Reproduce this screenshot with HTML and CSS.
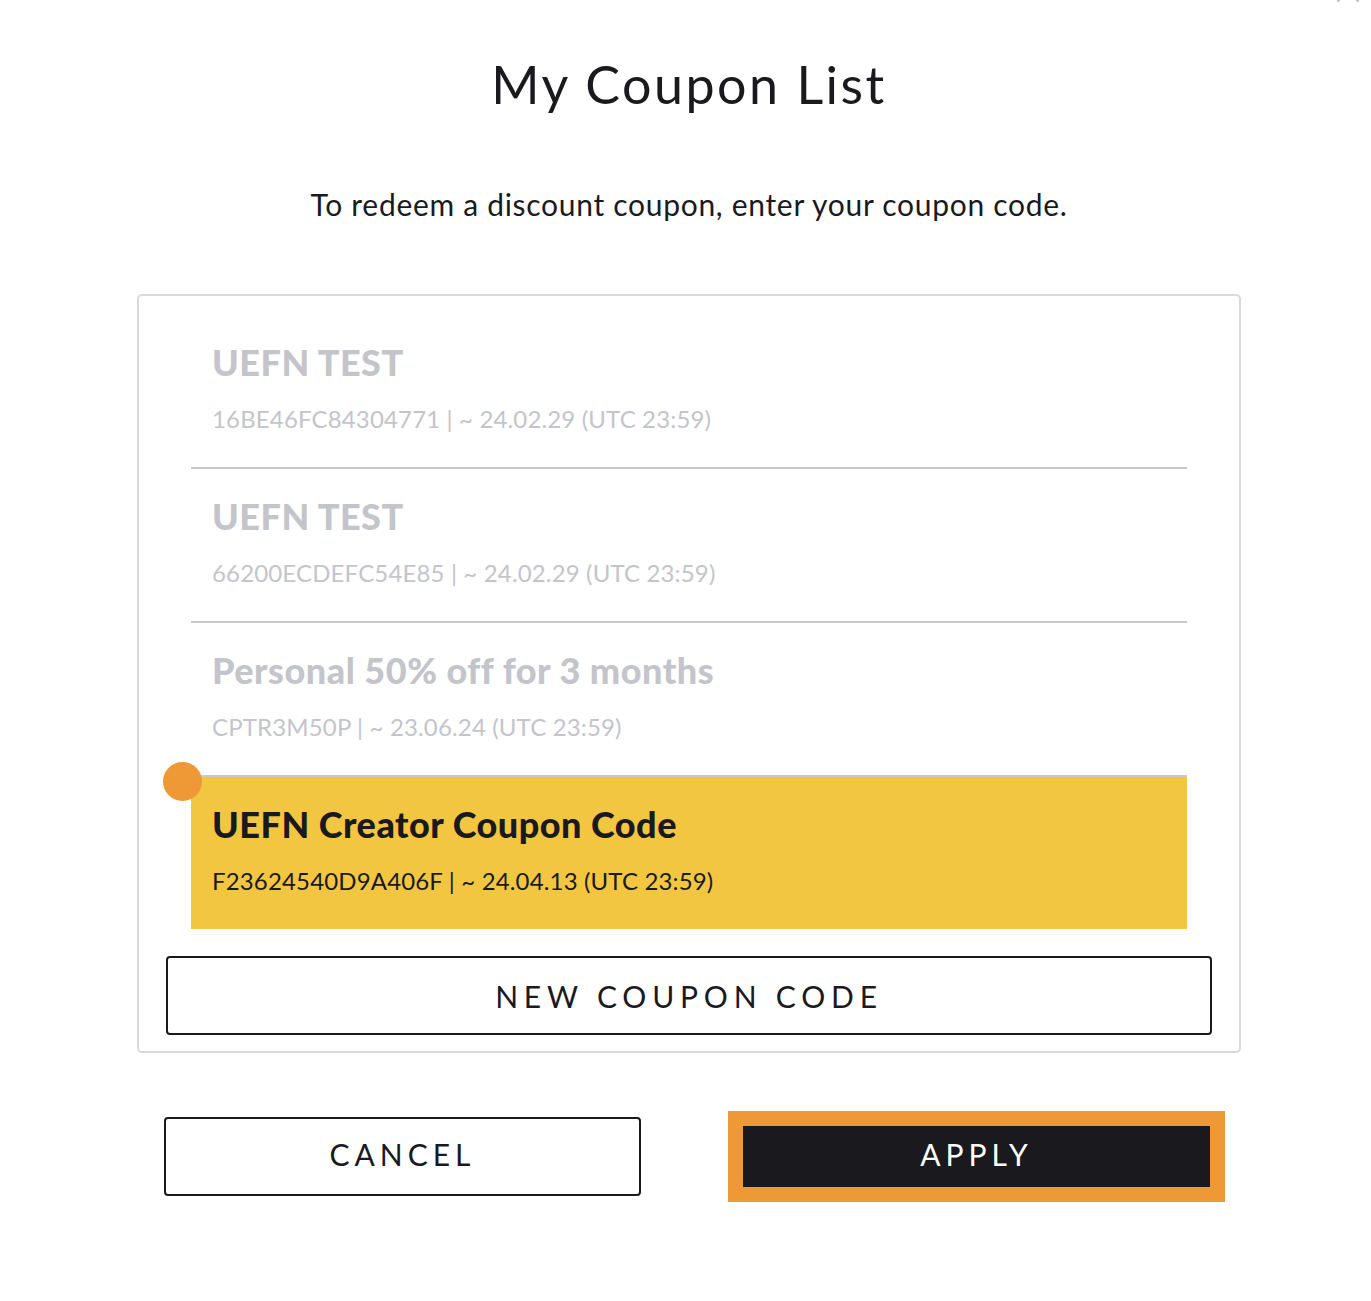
FILE: index.html
```html
<!DOCTYPE html>
<html lang="en">
  <head>
    <meta charset="UTF-8" />
    <title>My Coupon List</title>
    <link rel="stylesheet" href="styles.css">
  </head>
  <body>
    <main class="dialog">
      <span class="dialog-close"></span>
      <h1 class="dialog-title">My Coupon List</h1>
      <p class="dialog-hint">To redeem a discount coupon, enter your coupon code.</p>

      <section class="coupon-box">
        <ul class="coupon-list">
          <li class="coupon">
            <h2 class="coupon-name">UEFN TEST</h2>
            <p class="coupon-meta">16BE46FC84304771 | ~ 24.02.29 (UTC 23:59)</p>
          </li>
          <li class="coupon">
            <h2 class="coupon-name">UEFN TEST</h2>
            <p class="coupon-meta">66200ECDEFC54E85 | ~ 24.02.29 (UTC 23:59)</p>
          </li>
          <li class="coupon">
            <h2 class="coupon-name">Personal 50% off for 3 months</h2>
            <p class="coupon-meta">CPTR3M50P | ~ 23.06.24 (UTC 23:59)</p>
          </li>
          <li class="coupon coupon-selected">
            <span class="coupon-dot"></span>
            <h2 class="coupon-name">UEFN Creator Coupon Code</h2>
            <p class="coupon-meta">F23624540D9A406F | ~ 24.04.13 (UTC 23:59)</p>
          </li>
        </ul>
        <button class="btn btn-outline btn-new">NEW COUPON CODE</button>
      </section>

      <div class="actions">
        <button class="btn btn-outline btn-cancel">CANCEL</button>
        <div class="apply-focus">
          <button class="btn btn-dark btn-apply">APPLY</button>
        </div>
      </div>
    </main>
  </body>
</html>
```

FILE: styles.css
```css
body {
  margin: 0;
  background-color: white;
  font-family: Lato, "Open Sans", sans-serif;
  color: #1a1a1e;
}

.dialog {
  position: relative;
  width: 1104px;
  margin-left: 137px;
  padding-top: 54px;
}

/* close button, mostly scrolled out of view */
.dialog-close {
  position: absolute;
  top: -20px;
  right: -118px;
  width: 22px;
  height: 22px;
}

.dialog-close::before,
.dialog-close::after {
  content: "";
  position: absolute;
  left: 10px;
  top: -4px;
  width: 2px;
  height: 30px;
  background-color: #b8b8be;
  transform: rotate(45deg);
}

.dialog-close::after {
  transform: rotate(-45deg);
}

.dialog-title {
  margin: 0;
  font-size: 52px;
  line-height: 60px;
  font-weight: 400;
  letter-spacing: 2.5px;
  text-align: center;
}

.dialog-hint {
  margin: 72px 0 0;
  font-size: 30px;
  line-height: 36px;
  letter-spacing: 0.7px;
  text-align: center;
}

.coupon-box {
  margin-top: 72px;
  border: 2px solid #d9d9db;
  border-radius: 5px;
  padding: 19px 27px 16px;
}

.coupon-list {
  list-style: none;
  margin: 0 25px;
  padding: 0;
}

.coupon {
  position: relative;
  padding: 25px 21px 33px;
  border-bottom: 2px solid #c8c8cd;
  color: #c4c4cb;
}

.coupon:last-child {
  border-bottom: 0;
}

.coupon-selected {
  background-color: #f2c641;
  color: #1a1a1e;
}

.coupon-dot {
  position: absolute;
  left: -28px;
  top: -15px;
  width: 39px;
  height: 39px;
  border-radius: 50%;
  background-color: #ef9836;
}

.coupon-name {
  margin: 0;
  font-size: 36px;
  line-height: 44px;
  font-weight: 900;
  letter-spacing: 0.5px;
}

.coupon-meta {
  margin: 20px 0 0;
  font-size: 24px;
  line-height: 30px;
  letter-spacing: 0.15px;
}

.btn {
  font-family: inherit;
  font-size: 30px;
  letter-spacing: 5px;
  cursor: pointer;
}

.btn-outline {
  background-color: white;
  border: 2px solid #1a1a1e;
  border-radius: 4px;
  color: #1a1a1e;
}

.btn-new {
  display: block;
  width: 100%;
  height: 79px;
  margin-top: 27px;
  letter-spacing: 5.8px;
}

.actions {
  display: flex;
  justify-content: space-between;
  align-items: center;
  margin-top: 58px;
  padding: 0 16px 0 27px;
}

.btn-cancel {
  width: 477px;
  height: 79px;
  padding-bottom: 6px;
}

.apply-focus {
  padding: 15px;
  background-color: #ef9836;
}

.btn-dark {
  display: block;
  width: 467px;
  height: 61px;
  padding-bottom: 6px;
  border: 0;
  background-color: #1a1a1e;
  color: white;
}
```
